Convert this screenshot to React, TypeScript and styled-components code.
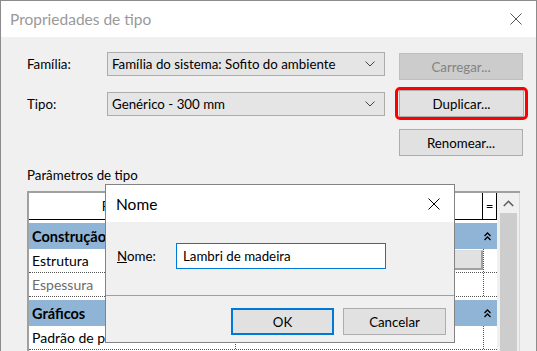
import React from 'react';
import styled, { createGlobalStyle } from 'styled-components';

const GlobalStyle = createGlobalStyle`
  html, body {
    margin: 0;
    padding: 0;
    background: #f0f0f0;
  }
  body {
    font-family: Lato, "Noto Sans", sans-serif;
    font-size: 13.3px;
    color: #000;
  }
`;

const Window = styled.div`
  position: relative;
  box-sizing: border-box;
  width: 537px;
  height: 351px;
  border: 1px solid #8c8c8c;
  border-bottom: none;
  background: #f0f0f0;
  overflow: hidden;
  display: flex;
  flex-direction: column;
`;

const TitleBar = styled.div`
  flex: 0 0 36px;
  display: flex;
  align-items: center;
  justify-content: space-between;
  padding: 0 14px 0 9px;
  background: #fff;
`;

const Title = styled.span<{ $active?: boolean }>`
  font-size: 15.5px;
  color: ${(p) => (p.$active ? '#000' : '#999')};
`;

const Body = styled.div`
  padding: 15px 0 0 26px;
  display: flex;
  flex-direction: column;
`;

const FormRow = styled.div<{ $top: number; $height: number }>`
  display: flex;
  align-items: flex-start;
  margin-top: ${(p) => p.$top}px;
  height: ${(p) => p.$height}px;
`;

const Label = styled.div<{ $offset: number }>`
  width: 80px;
  margin-top: ${(p) => p.$offset}px;
  line-height: 24px;
`;

const Combo = styled.div<{ $offset: number }>`
  box-sizing: border-box;
  width: 278px;
  height: 24px;
  margin-top: ${(p) => p.$offset}px;
  margin-right: 14px;
  padding: 0 9px 0 4px;
  display: flex;
  align-items: center;
  justify-content: space-between;
  background: #e5e5e5;
  border: 1px solid #acacac;
`;

const Button = styled.div<{ $disabled?: boolean; $offset?: number; $w?: number }>`
  box-sizing: border-box;
  width: ${(p) => p.$w ?? 124}px;
  height: 27px;
  margin-top: ${(p) => p.$offset ?? 0}px;
  display: flex;
  align-items: center;
  justify-content: center;
  background: ${(p) => (p.$disabled ? '#cccccc' : '#e1e1e1')};
  border: 1px solid ${(p) => (p.$disabled ? '#bfbfbf' : '#adadad')};
  color: ${(p) => (p.$disabled ? '#838383' : '#000')};
`;

const Highlight = styled.div`
  margin-left: -4px;
  padding: 0 1px;
  border: 3px solid #ff0000;
  border-radius: 5px;
`;

const Spacer = styled.div`
  width: 372px;
`;

const SectionLabel = styled.div`
  margin-top: 9px;
  line-height: 20px;
`;

const Table = styled.div`
  margin-top: 6px;
  width: 493px;
  height: 200px;
  display: flex;
  border-top: 2px solid #a0a0a0;
  border-left: 2px solid #a0a0a0;
  box-sizing: border-box;
`;

const Grid = styled.div`
  width: 468px;
  background: #fff;
  display: flex;
  flex-direction: column;
`;

const HeaderRow = styled.div`
  display: grid;
  grid-template-columns: 206px 248px 14px;
  height: 26px;
  border-bottom: 1px solid #000;
  box-sizing: content-box;
`;

const HeaderCell = styled.div<{ $sep?: boolean }>`
  display: flex;
  align-items: center;
  justify-content: center;
  border-left: ${(p) => (p.$sep ? '1px solid #000' : 'none')};
  border-right: ${(p) => (p.$sep ? '1px solid #000' : 'none')};
  margin-left: ${(p) => (p.$sep ? '-1px' : '0')};
`;

const GroupRow = styled.div`
  margin-top: 3px;
  height: 26px;
  background: #8fb4d6;
  display: flex;
  align-items: center;
  justify-content: space-between;
  padding: 0 6px 0 3px;
  font-weight: 700;
  font-size: 14.5px;
`;

const ParamRow = styled.div`
  display: grid;
  grid-template-columns: 206px 248px 14px;
  height: 23px;
  border-bottom: 1px dotted #555;
`;

const ParamCell = styled.div<{ $muted?: boolean }>`
  display: flex;
  align-items: center;
  padding-left: 3px;
  white-space: nowrap;
  overflow: hidden;
  font-size: 14px;
  color: ${(p) => (p.$muted ? '#6d6d6d' : '#000')};
`;

const ValueCell = styled.div`
  border-left: 1px dotted #555;
  display: flex;
  align-items: center;
  padding: 1px 0 2px;
  box-sizing: border-box;
`;

const EditButton = styled.div`
  flex: 1;
  height: 100%;
  box-sizing: border-box;
  display: flex;
  align-items: center;
  justify-content: center;
  background: #e1e1e1;
  border: 1px solid #dadada;
  border-right: 2px solid #a0a0a0;
  border-bottom: 2px solid #a0a0a0;
`;

const EqCell = styled.div`
  border-left: 1px dotted #555;
`;

const Scrollbar = styled.div`
  width: 23px;
  background: #f0f0f0;
  display: flex;
  flex-direction: column;
  align-items: center;
  border-right: 1px solid #d9d9d9;
`;

const ScrollArrow = styled.div`
  height: 20px;
  display: flex;
  align-items: center;
  justify-content: center;
`;

const Thumb = styled.div`
  width: 17px;
  flex: 1;
  background: #cdcdcd;
`;

const Dialog = styled.div`
  position: absolute;
  left: 104px;
  top: 183px;
  width: 350px;
  height: 159px;
  box-sizing: border-box;
  border: 1px solid #838383;
  background: #f0f0f0;
  display: flex;
  flex-direction: column;
`;

const DialogTitleBar = styled(TitleBar)`
  flex: 0 0 37px;
  padding: 0 14px 0 10px;
`;

const DialogBody = styled.div`
  height: 74px;
  padding: 21px 0 0 11px;
  box-sizing: border-box;
  display: flex;
  align-items: flex-start;
  border-bottom: 1px solid #a0a0a0;
`;

const FieldLabel = styled.label`
  width: 59px;
  line-height: 26px;
`;

const TextInput = styled.div`
  box-sizing: border-box;
  width: 210px;
  height: 26px;
  padding-left: 6px;
  display: flex;
  align-items: center;
  background: #fff;
  border: 1px solid #0078d7;
`;

const DialogFooter = styled.div`
  display: flex;
  justify-content: flex-end;
  gap: 9px;
  padding: 12px 8px 0 0;
`;

const DialogButton = styled.div<{ $default?: boolean }>`
  box-sizing: border-box;
  width: 103px;
  height: 27px;
  display: flex;
  align-items: center;
  justify-content: center;
  background: #e1e1e1;
  border: ${(p) => (p.$default ? '2px solid #0078d7' : '1px solid #adadad')};
`;

const CloseIcon = ({ color }: { color: string }) => (
  <svg width="12" height="12" viewBox="0 0 12 12">
    <path d="M0.5 0.5 L11.5 11.5 M11.5 0.5 L0.5 11.5" stroke={color} strokeWidth="1" fill="none" />
  </svg>
);

const Chevron = () => (
  <svg width="10" height="6" viewBox="0 0 10 6">
    <path d="M0.5 0.5 L5 5 L9.5 0.5" stroke="#444" strokeWidth="1" fill="none" />
  </svg>
);

const Collapse = () => (
  <svg width="7" height="9" viewBox="0 0 7 9">
    <path d="M0.5 4 L3.5 1 L6.5 4 M0.5 8 L3.5 5 L6.5 8" stroke="#000" strokeWidth="1.3" fill="none" />
  </svg>
);

const ScrollUp = () => (
  <svg width="11" height="7" viewBox="0 0 11 7">
    <path d="M0.8 6 L5.5 1.3 L10.2 6" stroke="#606060" strokeWidth="1.6" fill="none" />
  </svg>
);

const App = (): React.ReactElement => (
  <>
    <GlobalStyle />
    <Window>
      <TitleBar>
        <Title>Propriedades de tipo</Title>
        <CloseIcon color="#555" />
      </TitleBar>
      <Body>
        <FormRow $top={0} $height={29}>
          <Label $offset={0}>Família:</Label>
          <Combo $offset={0}>
            <span>Família do sistema: Sofito do ambiente</span>
            <Chevron />
          </Combo>
          <Button $disabled $offset={1} $w={124}>Carregar...</Button>
        </FormRow>
        <FormRow $top={6} $height={33}>
          <Label $offset={5}>Tipo:</Label>
          <Combo $offset={5}>
            <span>Genérico - 300 mm</span>
            <Chevron />
          </Combo>
          <Highlight>
            <Button $w={125}>Duplicar...</Button>
          </Highlight>
        </FormRow>
        <FormRow $top={9} $height={27}>
          <Spacer />
          <Button $w={124}>Renomear...</Button>
        </FormRow>
        <SectionLabel>Parâmetros de tipo</SectionLabel>
        <Table>
          <Grid>
            <HeaderRow>
              <HeaderCell>Parâmetro</HeaderCell>
              <HeaderCell>Valor</HeaderCell>
              <HeaderCell $sep>=</HeaderCell>
            </HeaderRow>
            <GroupRow>
              <span>Construção</span>
              <Collapse />
            </GroupRow>
            <ParamRow>
              <ParamCell>Estrutura</ParamCell>
              <ValueCell>
                <EditButton>Editar...</EditButton>
              </ValueCell>
              <EqCell />
            </ParamRow>
            <ParamRow>
              <ParamCell $muted>Espessura</ParamCell>
              <ValueCell>300.0</ValueCell>
              <EqCell />
            </ParamRow>
            <GroupRow>
              <span>Gráficos</span>
              <Collapse />
            </GroupRow>
            <ParamRow>
              <ParamCell>Padrão de preenchimento</ParamCell>
              <ValueCell />
              <EqCell />
            </ParamRow>
          </Grid>
          <Scrollbar>
            <ScrollArrow>
              <ScrollUp />
            </ScrollArrow>
            <Thumb />
          </Scrollbar>
        </Table>
      </Body>
      <Dialog>
        <DialogTitleBar>
          <Title $active>Nome</Title>
          <CloseIcon color="#000" />
        </DialogTitleBar>
        <DialogBody>
          <FieldLabel>
            <u>N</u>ome:
          </FieldLabel>
          <TextInput>Lambri de madeira</TextInput>
        </DialogBody>
        <DialogFooter>
          <DialogButton $default>OK</DialogButton>
          <DialogButton>Cancelar</DialogButton>
        </DialogFooter>
      </Dialog>
    </Window>
  </>
);

export default App;
